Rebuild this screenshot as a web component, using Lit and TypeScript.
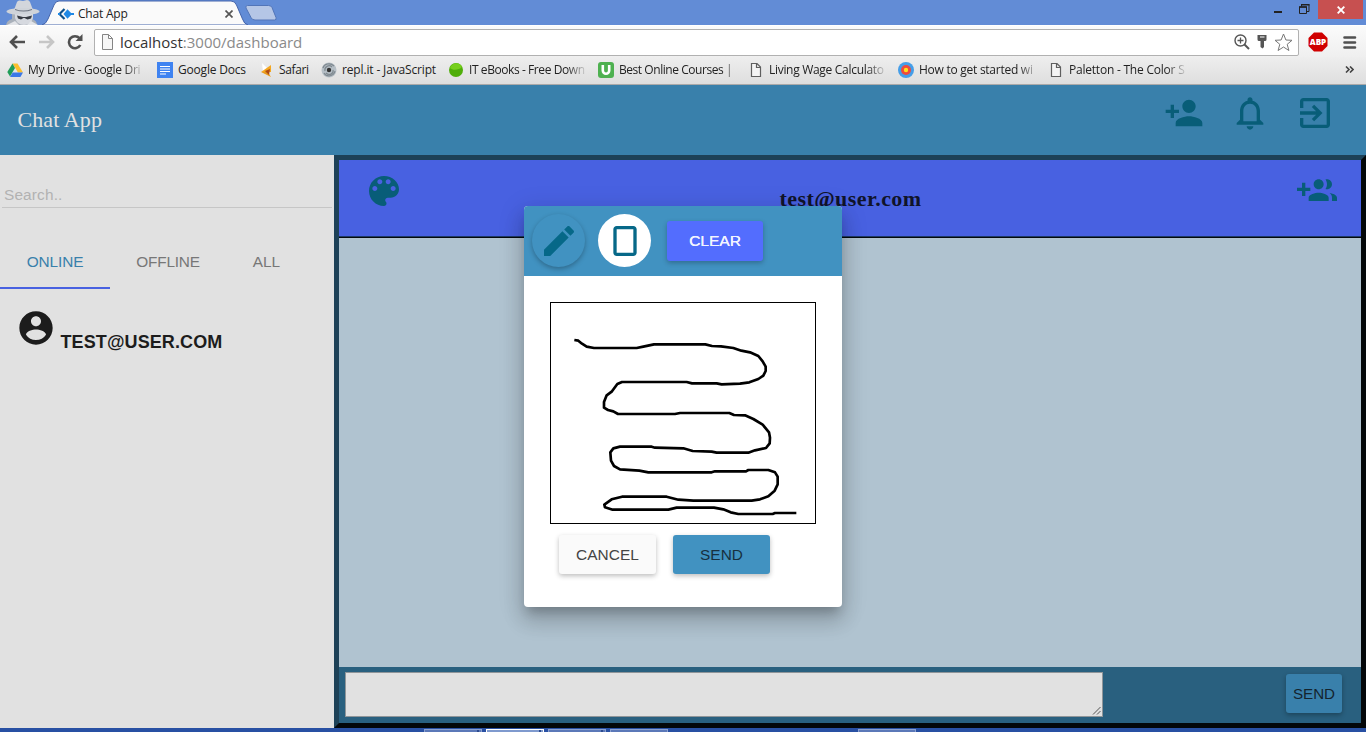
import { LitElement, html, css, svg } from "lit";
import { customElement } from "lit/decorators.js";

const PATHS = {
  personAdd: "M15 12c2.21 0 4-1.79 4-4s-1.79-4-4-4-4 1.79-4 4 1.79 4 4 4zm-9-2V7H4v3H1v2h3v3h2v-3h3v-2H6zm9 4c-2.67 0-8 1.34-8 4v2h16v-2c0-2.66-5.33-4-8-4z",
  bell: "M12 22c1.1 0 2-.9 2-2h-4c0 1.1.9 2 2 2zm6-6v-5c0-3.07-1.63-5.64-4.5-6.32V4c0-.83-.67-1.5-1.5-1.5s-1.5.67-1.5 1.5v.68C7.64 5.36 6 7.92 6 11v5l-2 2v1h16v-1l-2-2zm-2 1H8v-6c0-2.48 1.51-4.5 4-4.5s4 2.02 4 4.5v6z",
  exit: "M10.09 15.59L11.5 17l5-5-5-5-1.41 1.41L12.67 11H3v2h9.67l-2.58 2.59zM19 3H5c-1.11 0-2 .9-2 2v4h2V5h14v14H5v-4H3v4c0 1.1.89 2 2 2h14c1.1 0 2-.9 2-2V5c0-1.1-.9-2-2-2z",
  palette: "M12 3c-4.97 0-9 4.03-9 9s4.03 9 9 9c.83 0 1.5-.67 1.5-1.5 0-.39-.15-.74-.39-1.01-.23-.26-.38-.61-.38-.99 0-.83.67-1.5 1.5-1.5H16c2.76 0 5-2.24 5-5 0-4.42-4.03-8-9-8zm-5.5 9c-.83 0-1.5-.67-1.5-1.5S5.67 9 6.5 9 8 9.67 8 10.5 7.33 12 6.5 12zm3-4C8.67 8 8 7.33 8 6.5S8.67 5 9.5 5s1.5.67 1.5 1.5S10.33 8 9.5 8zm5 0c-.83 0-1.5-.67-1.5-1.5S13.67 5 14.5 5s1.5.67 1.5 1.5S15.33 8 14.5 8zm3 4c-.83 0-1.5-.67-1.5-1.5S16.67 9 17.5 9s1.5.67 1.5 1.5-.67 1.5-1.5 1.5z",
  groupAdd: "M8 10H5V7H3v3H0v2h3v3h2v-3h3v-2zm10 1c1.66 0 2.99-1.34 2.99-3S19.66 5 18 5c-.32 0-.63.05-.91.14.57.81.9 1.79.9 2.86s-.34 2.04-.9 2.86c.28.09.59.14.91.14zm-5 0c1.66 0 2.99-1.34 2.99-3S14.66 5 13 5c-1.66 0-3 1.34-3 3s1.34 3 3 3zm6.62 2.16c.83.73 1.38 1.66 1.38 2.84v2h3v-2c0-1.54-2.37-2.49-4.38-2.84zM13 13c-2 0-6 1-6 3v2h12v-2c0-2-4-3-6-3z",
  account: "M12 2C6.48 2 2 6.48 2 12s4.48 10 10 10 10-4.48 10-10S17.52 2 12 2zm0 3c1.66 0 3 1.34 3 3s-1.34 3-3 3-3-1.34-3-3 1.34-3 3-3zm0 14.2c-2.5 0-4.71-1.28-6-3.22.03-1.99 4-3.08 6-3.08 1.99 0 5.97 1.09 6 3.08-1.29 1.94-3.5 3.22-6 3.22z",
  edit: "M3 17.25V21h3.75L17.81 9.94l-3.75-3.75L3 17.25zM20.71 7.04c.39-.39.39-1.02 0-1.41l-2.34-2.34c-.39-.39-1.02-.39-1.41 0l-1.83 1.83 3.75 3.75 1.83-1.83z",
  portrait: "M17 3H7c-1.1 0-2 .9-2 2v14c0 1.1.9 2 2 2h10c1.1 0 2-.9 2-2V5c0-1.1-.9-2-2-2zm0 16H7V5h10v14z",
};

const icon = (d: string) =>
  html`<svg class="mi" width="40" height="40" viewBox="0 0 24 24"><path d=${d} fill="currentColor"></path></svg>`;

const page = svg`<path d="M3.500 1.500h5.500l3.500 3.500v9.500h-9zM8.500 1.500v4h4" fill="#f4f4f4" stroke="#5f5f5f" stroke-width="1.200"/>`;

// w: label width when it fades out at the right end; sp: letter spacing
const BOOKMARKS = [
  { label: "My Drive - Google Dri", slot: 150, gap: 5, w: 117, cls: "fade", sp: -0.3,
    art: svg`<path d="M5.500 1.500h5L16 10.500h-5z" fill="#fbc02d"/><path d="M5.500 1.500L8 6 3 14.500.300 10z" fill="#1f9d58"/><path d="M5.700 10.500H16l-2.600 4.500H3z" fill="#3b78e7"/>` },
  { label: "Google Docs", slot: 101, gap: 5, w: 0, cls: "", sp: -0.2,
    art: svg`<path d="M0 0h16v16H0z" fill="#3f83f1"/><path d="M3 4.500h10M3 7h10M3 9.500h10M3 12h6" stroke="#fff" stroke-width="1.200"/>` },
  { label: "Safari", slot: 63, gap: 5, w: 0, cls: "", sp: -0.35,
    art: svg`<path d="M4 1l6 6-5 3z" fill="#fff"/><path d="M13 3v7L3 10z" fill="#f4a720"/><path d="M3 10h7l3 5z" fill="#e89a1c"/><path d="M7 9l5-2-1 6z" fill="#b04a12"/>` },
  { label: "repl.it - JavaScript", slot: 127, gap: 5, w: 0, cls: "", sp: -0.15,
    art: svg`<circle cx="8" cy="8" r="7.500" fill="#b6bfc6"/><path d="M2 6c1-4 7-6 11-2M14 9c-1 5-8 7-11 2M4 9c-1-4 4-7 7-4M12 8c1 4-4 6-7 3" fill="none" stroke="#7f8990" stroke-width="1.200"/><circle cx="8" cy="8" r="2.200" fill="#333"/>` },
  { label: "IT eBooks - Free Down", slot: 150, gap: 5, w: 119, cls: "fade", sp: -0.42,
    art: svg`<circle cx="8" cy="8" r="7" fill="#4fae0a"/><path d="M2 6c2-6 10-6 12-1-3 3-9 4-12 1z" fill="#77cf1c"/>` },
  { label: "Best Online Courses |", slot: 150, gap: 5, w: 125, cls: "fade", sp: -0.45,
    art: svg`<rect width="16" height="16" rx="3" fill="#4eb150"/><path d="M4.800 3v5.500a3.200 3.200 0 0 0 6.400 0V3" fill="none" stroke="#fff" stroke-width="2.600"/>` },
  { label: "Living Wage Calculato", slot: 150, gap: 5, w: 119, cls: "fade", sp: -0.3,
    art: page },
  { label: "How to get started wi", slot: 150, gap: 5, w: 121, cls: "fade", sp: -0.26,
    art: svg`<circle cx="8" cy="8" r="8" fill="#459ee8"/><circle cx="8" cy="8" r="5" fill="#ef4b3c"/><circle cx="8" cy="8" r="2.200" fill="#fde21a"/>` },
  { label: "Paletton - The Color S", slot: 150, gap: 5, w: 119, cls: "fade", sp: -0.22,
    art: page },
];

@customElement("browser-chrome")
class BrowserChrome extends LitElement {
  static styles = css`
    :host { display: block; height: 85px; font-family: "Open Sans", "Noto Sans", sans-serif; color: #222; }
    svg { display: block; flex: none; }
    .title { height: 25px; background: #628cd6; display: flex; align-items: flex-start; }
    .tab { width: 208px; height: 25px; margin-left: -4px; display: grid; }
    .tab > * { grid-area: 1 / 1; }
    .tabrow { display: flex; align-items: center; height: 25px; padding: 1px 17px 0 16px; font-size: 12px; }
    .tabname { margin-left: 4px; flex: 1; letter-spacing: -0.2px; }
    .newtab { margin: 5px 0 0 -6px; }
    .gap { flex: 1; }
    .min { margin: 11px 17px 0 0; width: 8px; height: 2px; background: #222; }
    .restore { margin: 4px 8px 0 0; }
    .close { width: 45px; height: 19px; margin-right: 3px; background: #c75050; display: flex; align-items: center; justify-content: center; }
    .bar { height: 32px; background: linear-gradient(#fbfbfb, #efefef); display: flex; align-items: center; box-sizing: border-box; padding: 2px 9px 0 9px; box-shadow: inset 0 1px #fff; }
    .nav { margin-right: 12px; }
    .reload { margin-right: 11px; }
    .omni { flex: none; width: 1205px; height: 27px; box-sizing: border-box; border: 1px solid #b1b1b1; border-radius: 2px; background: #fff; display: flex; align-items: center; padding: 0 2px 0 5px; }
    .url { margin-left: 5px; font-size: 15px; flex: 1; color: #8a8a8a; white-space: nowrap; line-height: 22px; }
    .host { color: #333; }
    .abp { margin-left: 9px; }
    .menu { margin-left: 15px; }
    .marks { height: 28px; box-sizing: border-box; background: linear-gradient(#eee, #dedede); border-bottom: 1px solid #aaa9a9; display: flex; align-items: center; padding: 0 12px 2px 7px; }
    .mark { display: flex; align-items: center; flex: none; font-size: 12px; white-space: nowrap; gap: 5px; }
    .label { line-height: 18px; }
    .fade { -webkit-mask-image: linear-gradient(90deg, #000 82%, transparent); mask-image: linear-gradient(90deg, #000 82%, transparent); }
    .more { margin-left: auto; }
  `;
  render() {
    return html`
      <div class="title">
        <svg width="46" height="25" viewBox="0 0 46 25">
          <path d="M6 25c1-4 3-5 6-6v-6h20v6c3 1 5 3 5 6z" fill="#a9b0ba"/>
          <path d="M14 10l3-8q1-2 3-1.500l3 .5 4-1q2 0 3 2l3 8z" fill="#d3d6dc"/>
          <ellipse cx="23" cy="11.500" rx="16.500" ry="3.500" fill="#cfd3d9"/>
          <path d="M15 9q8 3 17 0v1q-8 3-17 0z" fill="#6d7480"/>
          <path d="M15 14h18v4q-2 7-9 7t-9-7z" fill="#d6d9df"/>
          <path d="M17 15.500l6 1.500h3l6-1.500-1 3-3.500 1-3-1.500h-1L21 19.500l-3-1z" fill="#383c44"/>
          <path d="M7 25l8-4 4 4zM38 25l-7-4-4 4z" fill="#e3e5e9"/>
        </svg>
        <div class="tab">
          <svg width="208" height="25" viewBox="0 0 208 25">
            <path d="M0 25q4-1 6-6l6-14q1.500-4 5-4h172q4 0 5.500 4l6 14q1.500 5 5.500 6z" fill="#fafafa" stroke="#4465ac"/>
          </svg>
          <div class="tabrow">
            <svg width="16" height="12" viewBox="0 0 16 12"><path d="M6.500 1L1.500 6l5 5" fill="none" stroke="#0b4f8a" stroke-width="2.200"/><path d="M9.500 1.200L14 6l-4.500 4.800L5.500 6z" fill="#1e88e5"/><path d="M12 6h4M0 6h2" stroke="#1e88e5" stroke-width="2"/></svg>
            <span class="tabname">Chat App</span>
            <svg width="8" height="8" viewBox="0 0 8 8"><path d="M.500.500l7 7M7.500.500l-7 7" stroke="#555" stroke-width="1.700"/></svg>
          </div>
        </div>
        <svg class="newtab" width="34" height="16" viewBox="0 0 34 16"><path d="M3.500.500h21q2.500 0 3.500 2l4 10q.8 2.500-1.500 2.500H11q-3 0-4-2.500L2 3q-1-2 1.500-2.500z" fill="#b5c6e6" stroke="#5275b8"/></svg>
        <div class="gap"></div>
        <div class="min"></div>
        <svg class="restore" width="11" height="10" viewBox="0 0 11 10"><path d="M.500 3h7v6.500h-7zM2.500 2.500V.500h7.500v7H8" fill="none" stroke="#222"/><path d="M0 3h8M2 .700h8.500" stroke="#222" stroke-width="1.500"/></svg>
        <div class="close"><svg width="8" height="8" viewBox="0 0 8 8"><path d="M.700.700l6.600 6.600M7.300.700L.700 7.300" stroke="#fff" stroke-width="1.900"/></svg></div>
      </div>
      <div class="bar">
        <svg class="nav" width="17" height="14" viewBox="0 0 17 14"><path d="M8 1L2 7l6 6M2 7h14" fill="none" stroke="#505050" stroke-width="2.600"/></svg>
        <svg class="nav" width="17" height="14" viewBox="0 0 17 14"><path d="M9 1l6 6-6 6M15 7H1" fill="none" stroke="#c6c6c6" stroke-width="2.600"/></svg>
        <svg class="reload" width="16" height="16" viewBox="0 0 16 16"><path d="M13.300 11A6 6 0 1 1 12.500 4.200" fill="none" stroke="#505050" stroke-width="2.600"/><path d="M15.500 0v7h-7z" fill="#505050"/></svg>
        <div class="omni">
          <svg width="15" height="16" viewBox="0 0 15 16"><path d="M2.500.500h6l4 4v11h-10zM8.500.500v4h4" fill="#f6f6f6" stroke="#858585"/></svg>
          <span class="url"><span class="host">localhost</span>:3000/dashboard</span>
          <svg width="63" height="20" viewBox="0 0 63 20">
            <circle cx="7.500" cy="8.500" r="5.500" fill="none" stroke="#555" stroke-width="1.400"/><path d="M4.500 8.500h6M7.500 5.500v6" stroke="#555" stroke-width="1.300"/><path d="M11.500 12.500l4.500 4.500" stroke="#555" stroke-width="2"/>
            <path d="M24.500 3h9v4.500q0 1.500-1.500 1.500h-1v6L29.500 16.500 27.500 15V9h-1.500q-1.500 0-1.500-1.500z" fill="#555"/><path d="M27 5h4.500" stroke="#fff"/>
            <path d="M50.500 2l2.400 6 6.100.3-4.800 4 1.700 6.200-5.400-3.500-5.400 3.500 1.700-6.200-4.800-4 6.100-.3z" fill="#fff" stroke="#777"/>
          </svg>
        </div>
        <svg class="abp" width="20" height="20" viewBox="0 0 20 20"><path d="M6 .500h8L19.500 6v8L14 19.500H6L.500 14V6z" fill="#d00000"/><text x="10" y="13.400" text-anchor="middle" font-family="Open Sans" font-weight="800" font-size="9" textLength="16.500" lengthAdjust="spacingAndGlyphs" fill="#fff">ABP</text></svg>
        <svg class="menu" width="14" height="13" viewBox="0 0 14 13"><path d="M1.500 1.500h10.500M1.500 6.500h10.500M1.500 11.500h10.500" stroke="#505050" stroke-width="2.600" stroke-linecap="round"/></svg>
      </div>
      <div class="marks">
        ${BOOKMARKS.map((b) => html`
          <div class="mark" style="width:${b.slot}px">
            <svg width="16" height="16" viewBox="0 0 16 16">${b.art}</svg>
            <span class="label ${b.cls}" style="letter-spacing:${b.sp}px;${b.cls ? `width:${b.w}px` : ""}">${b.label}</span>
          </div>`)}
        <svg class="more" width="9" height="7" viewBox="0 0 9 7"><path d="M1 .500l3 3-3 3M5 .500l3 3-3 3" fill="none" stroke="#444" stroke-width="1.600"/></svg>
      </div>`;
  }
}

@customElement("draw-dialog")
class DrawDialog extends LitElement {
  static styles = css`
    :host { display: block; width: 318px; height: 401px; background: #fff; border-radius: 4px; overflow: hidden; font-family: "Liberation Sans", sans-serif; box-shadow: 0 8px 10px -4px rgba(0,0,0,.2), 0 14px 20px 2px rgba(0,0,0,.14), 0 5px 24px 4px rgba(0,0,0,.1); }
    .head { height: 70px; box-sizing: border-box; padding: 8px; background: #4192c1; display: flex; align-items: flex-start; }
    .round { width: 53px; height: 53px; border-radius: 50%; display: grid; place-items: center; color: #066888; margin-right: 13px; }
    .pen { box-shadow: 0 2px 5px rgba(0,0,0,.28); }
    .white { background: #fff; }
    .mi { display: block; }
    .btn { height: 39px; width: 97px; border-radius: 3px; display: flex; align-items: center; justify-content: center; font-size: 15.4px; letter-spacing: .1px; box-shadow: 0 2px 5px rgba(0,0,0,.26); }
    .clear { width: 96px; height: 40px; margin: 7px 0 0 3px; background: #536dfe; color: #f3f5ff; text-shadow: .3px 0 #f3f5ff; }
    .body { padding: 26px 26px 0; }
    .board { width: 264px; height: 220px; border: 1px solid #000; display: block; }
    .actions { display: flex; gap: 17px; padding: 11px 0 0 9px; }
    .cancel { background: #fafafa; color: #444; }
    .send { background: #4192c1; color: #17303f; }
  `;
  render() {
    return html`
      <div class="head">
        <div class="round pen">${icon(PATHS.edit)}</div>
        <div class="round white">${icon(PATHS.portrait)}</div>
        <div class="btn clear">CLEAR</div>
      </div>
      <div class="body">
        <svg class="board" viewBox="33 39 792 660">
          <path fill="none" stroke="#000" stroke-width="8" stroke-linejoin="round" d="M103 150L115 152 126 161 140 170 162 174 290 174 310 170 342 163 496 163 516 168 543 169 580 174 604 182 630 187 655 198 668 214 677 230 677 243 670 257 655 267 628 277 600 281 545 283 530 280 456 280 440 276 246 276 232 282 216 304 200 316 192 336 192 353 204 360 220 364 234 372 405 372 420 369 568 369 582 375 615 376 640 387 668 404 687 427 690 443 689 460 678 474 645 481 625 488 530 488 515 485 458 483 430 475 345 473 335 470 240 470 220 475 211 487 213 512 222 528 240 538 298 542 325 547 515 547 525 544 618 544 625 540 685 540 705 547 713 560 713 583 704 602 685 619 660 628 635 632 460 632 415 629 380 620 246 620 215 628 193 644 195 652 218 659 385 659 410 653 522 653 550 658 572 667 595 672 698 672 705 669 769 669"/>
        </svg>
        <div class="actions"><div class="btn cancel">CANCEL</div><div class="btn send">SEND</div></div>
      </div>`;
  }
}

@customElement("app-root")
class AppRoot extends LitElement {
  static styles = css`
    :host { display: block; position: relative; width: 1366px; height: 732px; overflow: hidden; font-family: "Liberation Sans", Arial, sans-serif; }
    .mi { display: block; flex: none; }
    .head { height: 70px; box-sizing: border-box; background: #3980ab; display: flex; justify-content: space-between; padding: 8px 31px 0 17.5px; color: #e1e1e1; }
    .brand { font: 22px/54px "Liberation Serif", serif; letter-spacing: .1px; }
    .tools { display: flex; gap: 25.5px; color: #085d78; }
    .main { display: flex; height: 573px; }
    .side { width: 334px; background: #e1e1e1; }
    .search { margin: 23px 2px 0; height: 30px; box-sizing: border-box; border-bottom: 1px solid #c6c6c6; padding-left: 2px; font-size: 15.4px; line-height: 34px; letter-spacing: .15px; color: #b2b2b2; }
    .tabs { display: flex; height: 81px; font-size: 15.4px; line-height: 18px; color: #777; }
    .t { box-sizing: border-box; padding-top: 45px; text-align: center; }
    .on { width: 110px; letter-spacing: -.1px; color: #3980ab; border-bottom: 2px solid #4861e1; }
    .off { width: 116px; letter-spacing: -.2px; }
    .all { width: 81px; }
    .user { display: flex; padding: 19px 0 0 15.5px; color: #1c1c1c; font-weight: bold; font-size: 18px; letter-spacing: .1px; }
    .mail { margin: 24px 0 0 5px; line-height: 21px; }
    .chat { flex: 1; display: flex; flex-direction: column; border: 5px solid; border-color: #1d4157 #030709 #030709 #1d4157; }
    .peer { height: 78px; box-sizing: border-box; background: #4861e1; border-bottom: 1px solid #05090c; box-shadow: inset 0 -1px #1d3a66; display: flex; justify-content: space-between; padding: 11px 24px 0 25px; color: #085d78; }
    .name { font: bold 22px/56px "Liberation Serif", serif; letter-spacing: .45px; color: #10142a; }
    .log { flex: 1; background: #b0c3d0; }
    .foot { height: 56px; box-sizing: border-box; background: #29607f; display: flex; justify-content: space-between; padding: 5px 19px 0 6px; }
    .input { width: 758px; height: 45px; box-sizing: border-box; border: 1px solid #8f9599; background: #e1e1e1; display: flex; align-items: flex-end; justify-content: flex-end; padding: 1px; }
    .send { width: 56px; height: 39px; margin-top: 2px; border-radius: 3px; background: #3980ab; color: #14242e; display: flex; align-items: center; justify-content: center; font-size: 15.2px; box-shadow: 0 2px 5px rgba(0,0,0,.3); }
    .task { height: 4px; background: #2850a3; display: flex; padding-left: 424px; gap: 4px; }
    .slot { width: 58px; box-sizing: border-box; background: #5b78b8; border: 1px solid #8ba0cf; border-bottom: 0; margin-top: 1px; display: flex; justify-content: flex-end; }
    .slot::after { content: ""; width: 2px; margin-right: 2px; background: #2b4b90; }
    .active { background: #7f9ace; border-color: #fff; }
    .last { margin-left: 186px; }
    .last::after, .plain::after { display: none; }
    .modal { position: absolute; left: 524px; top: 206px; }
  `;
  render() {
    return html`
      <browser-chrome></browser-chrome>
      <div class="head">
        <div class="brand">Chat App</div>
        <div class="tools">${icon(PATHS.personAdd)}${icon(PATHS.bell)}${icon(PATHS.exit)}</div>
      </div>
      <div class="main">
        <div class="side">
          <div class="search">Search..</div>
          <div class="tabs"><div class="t on">ONLINE</div><div class="t off">OFFLINE</div><div class="t all">ALL</div></div>
          <div class="user">${icon(PATHS.account)}<span class="mail">TEST@USER.COM</span></div>
        </div>
        <div class="chat">
          <div class="peer">${icon(PATHS.palette)}<div class="name">test@user.com</div>${icon(PATHS.groupAdd)}</div>
          <div class="log"></div>
          <div class="foot">
            <div class="input"><svg width="9" height="9" viewBox="0 0 9 9"><path d="M1 8.500L8.500 1M5 8.500L8.500 5" stroke="#555"/></svg></div>
            <div class="send">SEND</div>
          </div>
        </div>
      </div>
      <div class="task"><div class="slot"></div><div class="slot active"></div><div class="slot"></div><div class="slot plain"></div><div class="slot last"></div></div>
      <draw-dialog class="modal"></draw-dialog>`;
  }
}
